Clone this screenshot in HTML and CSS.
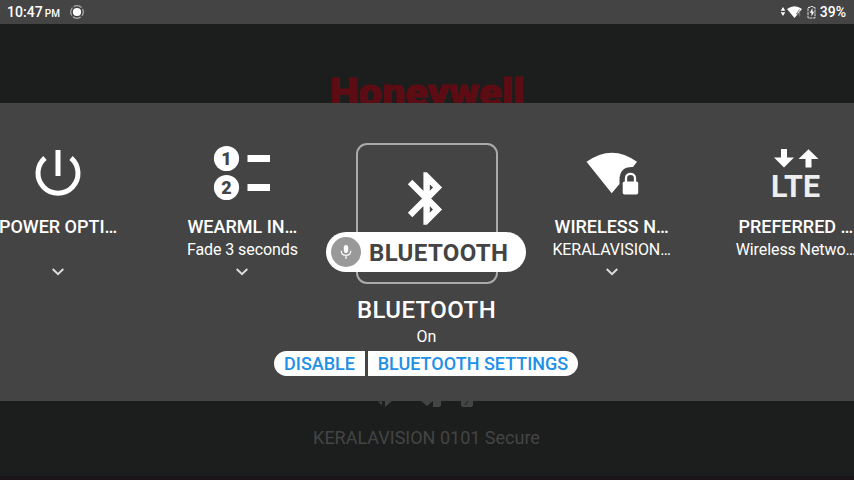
FILE: index.html
```html
<!DOCTYPE html>
<html lang="en">
<head>
<meta charset="utf-8">
<title>Quick settings</title>
<link rel="stylesheet" href="styles.css">
</head>
<body>
<header class="status">
  <div class="time">10:47<small>PM</small></div>
  <svg class="ring" width="16" height="16" viewBox="0 0 16 16"><circle cx="8" cy="8" r="6.300" fill="none" stroke="#aaa" stroke-width="1.300" stroke-dasharray="8.400 1.500" stroke-dashoffset="4.200"/><circle cx="8" cy="8" r="4.100" fill="#fff"/></svg>
  <svg class="signals" width="38" height="16" viewBox="0 0 38 16" fill="#fff">
    <path d="M.7 6.700 3 3l2.300 3.700zM.7 8.300h4.600L3 12z"/>
    <path d="M7 5Q14.500-.5 22 5L14.500 14z"/>
    <path d="M19.500 5.500l-3 4.300h3.500M19.700 7.500v5" fill="none" stroke="#777"/>
    <path d="M28 3.500h2v-1h3v1h2V14h-7z" fill="none" stroke="#ddd" stroke-dasharray="3 .7"/>
    <path d="M32.500 4l-2.700 4.800h1.700v3.700l2.700-4.800h-1.700z"/>
  </svg>
  <div class="percent">39%</div>
</header>
<section class="backdrop upper">
  <svg width="204" height="50" viewBox="0 0 204 50"><text class="brand" x="4.500" y="53" textLength="195" lengthAdjust="spacingAndGlyphs">Honeywell</text></svg>
</section>
<main class="panel">
  <div class="carousel">
    <article class="item">
      <svg class="icon" width="60" height="60" viewBox="0 0 60 60" fill="none" stroke="#fff" stroke-width="5"><path d="M17 15A20 20 0 1 0 43 15M30 7V33"/></svg>
      <h2>POWER OPTI…</h2><p></p>
      <svg class="chevron" width="14" height="10" viewBox="0 0 14 10"><path d="M1.700 2 7 7.200 12.300 2"/></svg>
    </article>
    <article class="item">
      <svg class="icon" width="60" height="60" viewBox="0 0 60 60" fill="#fff"><circle cx="14.500" cy="15.500" r="12.600"/><circle cx="14.500" cy="44.500" r="12.600"/><path d="M35.500 12H58v7H35.500zM35.500 41H58v7H35.500z"/><text class="digit" x="14.500" y="21.800">1</text><text class="digit" x="14.500" y="50.800">2</text></svg>
      <h2>WEARML IN…</h2><p>Fade 3 seconds</p>
      <svg class="chevron" width="14" height="10" viewBox="0 0 14 10"><path d="M1.700 2 7 7.200 12.300 2"/></svg>
    </article>
    <article class="item current">
      <div class="frame">
        <svg width="60" height="60" viewBox="0 0 60 60" fill="#fff"><path transform="translate(-1 .9) scale(2.550)" stroke="#fff" stroke-width=".5" d="M17.710 7.710 12 2h-1v7.590L6.410 5 5 6.410 10.590 12 5 17.590 6.410 19 11 14.410V22h1l5.710-5.710-4.300-4.290zM13 5.830l1.880 1.880L13 9.590zM14.880 16.290 13 18.170v-3.760z"/></svg>
      </div>
      <div class="voice">
        <span class="mic"><svg width="12" height="16" viewBox="0 0 12 16"><rect x="3.800" y="1" width="4.400" height="8" rx="2.200" fill="#fff"/><path d="M1.300 6.700v.6c0 5.400 9.400 5.400 9.400 0v-.6M6 11.500V15" fill="none" stroke="#fff" stroke-width="1.200"/></svg></span>
        <span class="command">BLUETOOTH</span>
      </div>
    </article>
    <article class="item right">
      <svg class="icon" width="60" height="60" viewBox="0 0 60 60" fill="#fff"><path d="M4.500 18.800Q30 .5 55 18.800L51 24Q37.500 23.500 37.500 37V41L29.700 50.200z"/><rect x="40.700" y="38.500" width="15.500" height="13" rx="1.800"/><path d="M44 39.500V35c0-5.500 9-5.500 9 0V39.500" fill="none" stroke="#fff" stroke-width="2.300"/></svg>
      <h2>WIRELESS N…</h2><p>KERALAVISION…</p>
      <svg class="chevron" width="14" height="10" viewBox="0 0 14 10"><path d="M1.700 2 7 7.200 12.300 2"/></svg>
    </article>
    <article class="item right">
      <svg class="icon" width="60" height="60" viewBox="0 0 60 60" fill="#fff"><path d="M15 6h6v8.500h7L18 24.500 8 14.500h7zM42.500 6.300 52.500 16H45.500v8.500h-6V16h-7z"/><text class="lte" x="5" y="53.800" textLength="49" lengthAdjust="spacingAndGlyphs">LTE</text></svg>
      <h2>PREFERRED …</h2><p>Wireless Netwo…</p>
    </article>
  </div>
  <div class="details">
    <h1>BLUETOOTH</h1>
    <p>On</p>
    <div class="actions"><button class="disable">DISABLE</button><button class="settings">BLUETOOTH SETTINGS</button></div>
  </div>
</main>
<section class="backdrop lower">
  <svg width="104" height="7" viewBox="0 0 104 7" fill="#444"><path d="M3 1 7 0v4zM10 0h7l-7 6zM46 0h12l-6 5zM58 0h8v4.500l-1.500 1.500H58zM86 0h12v4.500l-1.500 1.500h-9L86 4.500z"/><path d="M93 0l-3 4" stroke="#1c1e1d"/></svg>
  <p>KERALAVISION 0101 Secure</p>
</section>
</body>
</html>
```

FILE: styles.css
```css
* { box-sizing: border-box; margin: 0; padding: 0; }
body { width: 854px; height: 480px; overflow: hidden; background: #1c1e1d; color: #fff; font-family: Roboto, sans-serif; display: flex; flex-direction: column; }
svg { display: block; flex: none; }
.status { height: 24px; flex: none; background: #444; display: flex; align-items: center; padding: 0 8px 0 7px; font-size: 14px; font-weight: 500; }
.time { letter-spacing: .05px; }
.time small { font-size: 10px; margin-left: 2px; }
.ring { margin-left: 9px; }
.signals { margin-left: auto; margin-right: 2px; }
.percent { letter-spacing: .05px; }
.backdrop { overflow: hidden; flex: none; height: 79px; display: flex; flex-direction: column; align-items: center; }
.upper { padding-top: 29px; }
.brand { font: 900 38px Roboto, sans-serif; fill: #5d0c13; stroke: #5d0c13; stroke-width: 1; }
.panel { height: 298px; flex: none; background: #444; overflow: hidden; display: flex; flex-direction: column; align-items: center; }
.carousel { width: 854px; height: 181px; display: flex; justify-content: center; padding-top: 40px; }
.item { width: 184.3px; flex: none; display: flex; flex-direction: column; align-items: center; white-space: nowrap; }
.item > h2, .item > p, .item > svg { position: relative; left: -.3px; }
.right > h2, .right > p, .right > svg { left: .3px; }
h2 { font-size: 18px; line-height: 24px; font-weight: 500; margin-top: 12px; }
.item p { font-size: 16px; line-height: 22px; height: 22px; letter-spacing: -.08px; }
.chevron { margin-top: 6px; fill: none; stroke: #ddd; stroke-width: 2; }
.digit { font: 900 18px Roboto, sans-serif; text-anchor: middle; fill: #444; }
.lte { font: 700 31px Roboto, sans-serif; fill: #eee; }
.frame { width: 142px; height: 141px; border: 2px solid #aaa; border-radius: 11px; display: flex; justify-content: center; padding-top: 22px; flex: none; }
.voice { width: 200px; height: 40px; flex: none; margin: -52px 0 0 -2px; border-radius: 20px; background: #fff; display: flex; align-items: center; padding-left: 5px; position: relative; }
.mic { width: 30px; height: 30px; border-radius: 50%; background: #999; display: flex; align-items: center; justify-content: center; }
.command { color: #444; font-size: 24px; line-height: 30px; font-weight: 700; margin: 2px 0 0 8px; letter-spacing: .35px; }
.details { display: flex; flex-direction: column; align-items: center; padding-top: 10px; }
h1 { font-size: 24px; line-height: 32px; font-weight: 500; letter-spacing: .4px; margin-left: -1px; }
.details p { font-size: 16px; line-height: 22px; margin-left: -1px; }
.actions { display: flex; gap: 3px; margin-top: 3px; margin-left: -2px; }
button { height: 25px; border: 0; background: #fff; color: #1e90e5; font: 500 18px/25px Roboto, sans-serif; white-space: nowrap; }
.disable { width: 91px; border-radius: 13px 0 0 13px; }
.settings { width: 210px; border-radius: 0 13px 13px 0; }
.lower { border-bottom: 4px solid #1b1418; color: #444; font-size: 18px; }
.lower p { line-height: 24px; margin: 18px 0 0 -1px; }
```
